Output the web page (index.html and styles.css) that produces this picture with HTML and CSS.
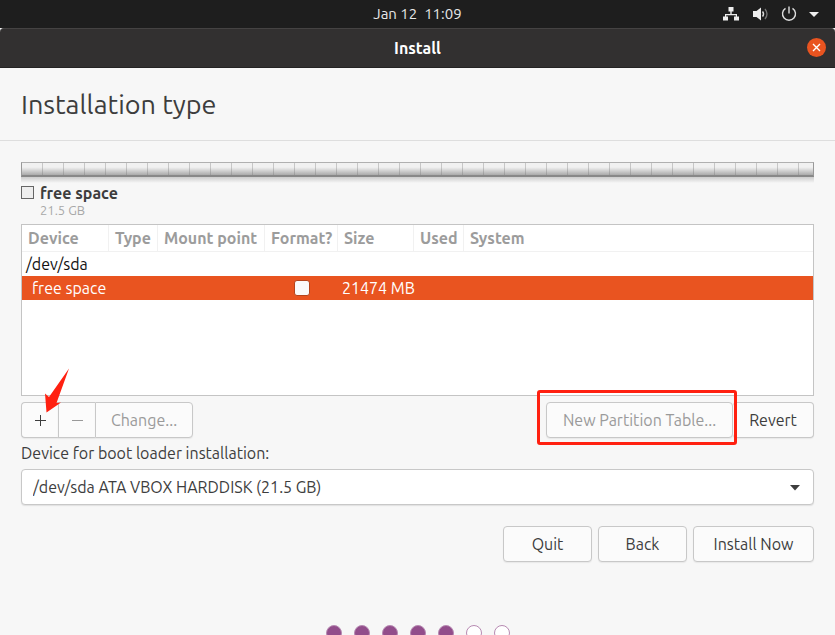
FILE: index.html
```html
<!DOCTYPE html>
<html lang="en">
<head>
<meta charset="utf-8">
<title>Install</title>
<link rel="stylesheet" href="styles.css">
</head>
<body>
<div class="screen">
  <header class="topbar">
    <time class="clock">Jan 12&nbsp; 11:09</time>
    <div class="tray">
      <svg width="18" height="16" viewBox="0 0 18 16" aria-hidden="true"><path d="M5.500 1h5v4.500h-1.800v2.500H14V10.500h2v4h-5v-4h1.800V9.200H3.200v1.300H5v4H0v-4h2V8h5.300V5.500H5.500z" fill="#eee"/></svg>
      <svg width="16" height="16" viewBox="0 0 16 16" aria-hidden="true"><path d="M0 5h3.500L8 1.500v13L3.500 11H0z" fill="#eee"/><path d="M9.500 5.500q2 2.500 0 5" stroke="#ddd" stroke-width="1.500" fill="none"/><path d="M12 3q4 5 0 10" stroke="#777" stroke-width="1.300" fill="none"/></svg>
      <svg width="16" height="16" viewBox="0 0 16 16" aria-hidden="true"><path d="M4.500 2.300a6.500 6.500 0 1 0 7 0M8 0.500v7" stroke="#ddd" stroke-width="1.400" fill="none"/></svg>
      <svg width="10" height="16" viewBox="0 0 10 16" aria-hidden="true"><path d="M0 6h10L5 11z" fill="#eee"/></svg>
    </div>
  </header>
  <div class="titlebar">
    <span class="window-title">Install</span>
    <button class="close" type="button" aria-label="Close"><svg width="19" height="19" viewBox="0 0 19 19"><path d="M6 6l7 7M13 6l-7 7" stroke="#fff" stroke-width="1.400"/></svg></button>
  </div>
  <h1 class="heading">Installation type</h1>
  <main class="content">
    <div class="disk"><div class="disk-bar"></div><div class="disk-reflection"></div></div>
    <div class="legend">
      <span class="swatch"></span>
      <div><div class="legend-name">free space</div><div class="legend-size">21.5 GB</div></div>
    </div>
    <div class="table-box">
      <table class="partitions">
        <colgroup><col class="c-device"><col class="c-type"><col class="c-mount"><col class="c-format"><col class="c-size"><col class="c-used"><col></colgroup>
        <thead><tr><th>Device</th><th>Type</th><th>Mount point</th><th>Format?</th><th>Size</th><th>Used</th><th>System</th></tr></thead>
        <tbody>
          <tr><td>/dev/sda</td><td></td><td></td><td></td><td></td><td></td><td></td></tr>
          <tr class="selected"><td class="child">free space</td><td></td><td></td><td class="check-cell"><input class="check" type="checkbox" aria-label="Format free space"></td><td>21474 MB</td><td></td><td></td></tr>
        </tbody>
      </table>
    </div>
    <div class="toolbar">
      <div class="group">
        <button class="btn icon-btn" type="button" aria-label="Add"><svg width="13" height="13" viewBox="0 0 13 13"><path d="M6.500 1v11M1 6.500h11" stroke="#3d3d3d"/></svg></button>
        <button class="btn icon-btn" type="button" aria-label="Remove" disabled><svg width="13" height="13" viewBox="0 0 13 13"><path d="M1 6.500h11" stroke="#999"/></svg></button>
        <button class="btn change" type="button" disabled>Change...</button>
        <svg class="arrow" width="26" height="46" viewBox="0 0 26 46" aria-hidden="true"><path d="M2.500 44.500L1 25.500l4 3.500L25 .5 12.500 35l4.500-.5z" fill="#ff2010"/></svg>
      </div>
      <div class="group">
        <div class="marked"><button class="btn new-table" type="button" disabled>New Partition Table...</button></div>
        <button class="btn revert" type="button">Revert</button>
      </div>
    </div>
    <label class="boot-label" for="boot">Device for boot loader installation:</label>
    <div class="select-wrap">
      <select id="boot" class="boot"><option>/dev/sda ATA VBOX HARDDISK (21.5 GB)</option></select>
      <svg class="caret" width="10" height="6" viewBox="0 0 10 6" aria-hidden="true"><path d="M0 0h10L5 5.500z" fill="#3d3d3d"/></svg>
    </div>
    <div class="actions">
      <button class="btn action" type="button">Quit</button>
      <button class="btn action" type="button">Back</button>
      <button class="btn action wide" type="button">Install Now</button>
    </div>
  </main>
  <div class="dots">
    <span class="dot done"></span><span class="dot done"></span><span class="dot done"></span><span class="dot done"></span><span class="dot done"></span><span class="dot"></span><span class="dot"></span>
  </div>
</div>
</body>
</html>
```
FILE: styles.css
```css
* { box-sizing: border-box; }
body { margin: 0; background: #f7f7f7; color: #3d3d3d; font: 16px/20px Ubuntu, "Noto Sans", sans-serif; }
.screen { height: 100vh; overflow: hidden; }
button, select { font: inherit; color: inherit; }
.topbar { position: relative; display: flex; justify-content: center; align-items: center; height: 28px; background: #1e1e1e; color: #e8e8e8; font-size: 15px; }
.tray { position: absolute; right: 16px; top: 6px; display: flex; gap: 12px; }
.titlebar { position: relative; display: flex; justify-content: center; align-items: center; height: 40px; background: #323030; border-top: 1px solid #454343; border-bottom: 1px solid #242323; border-radius: 4px 4px 0 0; color: #fff; font-weight: 700; }
.close { position: absolute; right: 9px; top: 9px; width: 19px; height: 19px; padding: 0; border: 0; border-radius: 50%; background: #e95420; }
.close svg { display: block; }
.heading { margin: 0; padding: 20px 21px; border-bottom: 1px solid #dedede; font-size: 27px; line-height: 32px; font-weight: 400; }
.content { padding: 21px; }
.disk-bar { height: 15px; border: 1px solid #999; border-top-color: #b0b0b0; border-bottom: 2px solid #888; background: repeating-linear-gradient(90deg, transparent 0 20px, rgba(120,120,120,.35) 20px 21px), linear-gradient(#f1f1f1 35%, #aaa); }
.disk-reflection { height: 6px; background: linear-gradient(#ccc, #f7f7f7); }
.legend { display: flex; gap: 6px; padding-top: 2px; }
.swatch { width: 13px; height: 13px; margin-top: 1px; border: 1px solid #666; background: #eee; }
.legend-name { font-weight: 700; line-height: 17px; }
.legend-size { color: #a8a8a8; font-size: 13px; line-height: 16px; }
.table-box { height: 172px; margin-top: 6px; border: 1px solid #c4c4c4; background: #fff; }
.partitions { width: 100%; table-layout: fixed; border-collapse: separate; border-spacing: 0; }
.c-device { width: 87px; }
.c-type { width: 49px; }
.c-mount { width: 107px; }
.c-format { width: 73px; }
.c-size { width: 76px; }
.c-used { width: 50px; }
.partitions th { height: 27px; padding: 0 0 0 6px; border-right: 1px solid #f1f1f1; border-bottom: 1px solid #f1f1f1; color: #9c9c9c; text-align: left; white-space: nowrap; }
.partitions th:last-child { border-right: 0; }
.partitions td { height: 24px; padding: 0 0 0 4px; color: #111; white-space: nowrap; }
.partitions .selected td { background: #e95420; color: #fff; }
.partitions .child { padding-left: 10px; }
.partitions .check-cell { padding: 0; text-align: center; }
.check { appearance: none; display: block; width: 16px; height: 16px; margin: 0 auto; border: 1px solid #b5441c; border-radius: 3px; background: #fafafa; }
.toolbar { display: flex; justify-content: space-between; margin-top: 6px; }
.group { position: relative; display: flex; }
.btn { height: 36px; padding: 0; border: 1px solid #c8c8c8; border-radius: 4px; background: #fbfbfb; box-shadow: 0 1px 1px #e8e8e8; white-space: nowrap; }
.btn:disabled { color: #9a9a9a; }
.icon-btn { display: flex; align-items: center; justify-content: center; width: 37px; border-right: 0; border-radius: 0; }
.icon-btn:first-child { border-radius: 4px 0 0 4px; }
.change { width: 98px; border-radius: 0 4px 4px 0; }
.new-table { width: 187px; }
.revert { width: 81px; border-left: 0; }
.marked { position: relative; }
.marked::after { content: ""; position: absolute; inset: -12px -4px -7px -9px; border: 3px solid #ff2010; border-radius: 3px; }
.arrow { position: absolute; left: 23px; top: -34px; }
.boot-label { display: block; margin: 6px 0; line-height: 19px; }
.select-wrap { position: relative; }
.boot { display: block; appearance: none; width: 100%; height: 36px; padding: 0 11px; border: 1px solid #c8c8c8; border-radius: 4px; background: #fff; box-shadow: 0 1px 1px #e0e0e0; }
.caret { position: absolute; right: 14px; top: 16px; pointer-events: none; }
.actions { display: flex; justify-content: flex-end; gap: 6px; margin-top: 21px; }
.action { width: 89px; }
.wide { width: 121px; }
.dots { display: flex; justify-content: center; gap: 12px; margin-top: 42px; }
.dot { width: 16px; height: 16px; border: 1px solid #b78ab2; border-radius: 50%; background: #fff; }
.done { background: #924d8b; }
```
